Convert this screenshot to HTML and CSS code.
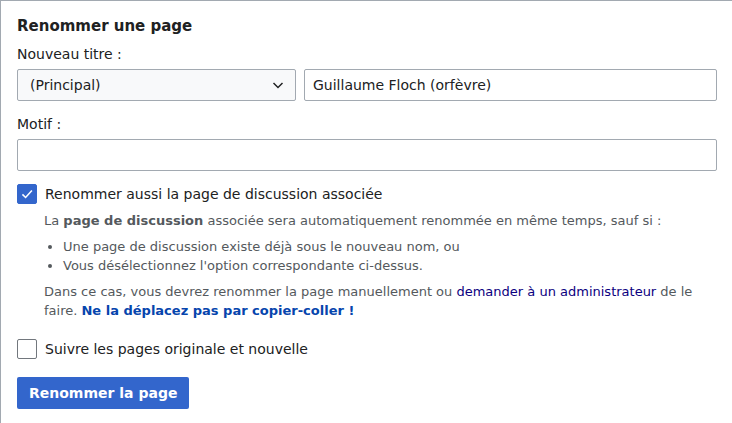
FILE: index.html
```html
<!DOCTYPE html>
<html lang="fr">
<head>
<meta charset="utf-8">
<link rel="stylesheet" href="styles.css">
</head>
<body>
<form class="fieldset">
  <div class="legend">Renommer une page</div>
  <div class="field">
    <div class="label">Nouveau titre :</div>
    <div class="title-row">
      <div class="select">
        <span>(Principal)</span>
        <svg class="chev" width="12" height="12" viewBox="0 0 20 20"><path d="M2.5 6.5 10 14l7.5-7.5" fill="none" stroke="#202122" stroke-width="2.4"/></svg>
      </div>
      <div class="input">Guillaume Floch (orfèvre)</div>
    </div>
  </div>
  <div class="field">
    <div class="label">Motif :</div>
    <div class="input wide"></div>
  </div>
  <div class="check-row">
    <span class="box checked"><svg width="14" height="14" viewBox="0 0 20 20"><path d="M3.5 10.5 8 15l9-10" fill="none" stroke="#fff" stroke-width="2.2"/></svg></span>
    <span class="check-label">Renommer aussi la page de discussion associée</span>
  </div>
  <div class="help">
    <p>La <b>page de discussion</b> associée sera automatiquement renommée en même temps, sauf si :</p>
    <ul>
      <li>Une page de discussion existe déjà sous le nouveau nom, ou</li>
      <li>Vous désélectionnez l'option correspondante ci-dessus.</li>
    </ul>
    <p>Dans ce cas, vous devrez renommer la page manuellement ou <a class="visited" href="#">demander à un administrateur</a> de le faire. <b class="strong-link">Ne la déplacez pas par copier-coller !</b></p>
  </div>
  <div class="check-row second">
    <span class="box"></span>
    <span class="check-label">Suivre les pages originale et nouvelle</span>
  </div>
  <div class="btn">Renommer la page</div>
</form>
</body>
</html>
```
FILE: styles.css
```css
html, body {
  margin: 0;
  padding: 0;
  overflow: hidden;
  background: #fff;
}
body {
  font-family: "DejaVu Sans", sans-serif;
  font-size: 14px;
  color: #202122;
}
.fieldset {
  width: 700px;
  border: 1px solid #a2a9b1;
  padding: 12px 16px 40px;
  margin: 0;
}
.legend {
  font-weight: bold;
  font-size: 15px;
  line-height: 26px;
  margin-bottom: 5px;
}
.label {
  line-height: 20px;
  margin-bottom: 5px;
}
.field {
  margin-bottom: 13px;
}
.title-row {
  display: flex;
  gap: 8px;
}
.select {
  width: 279px;
  box-sizing: border-box;
  height: 32px;
  border: 1px solid #a2a9b1;
  border-radius: 2px;
  background: #f8f9fa;
  display: flex;
  align-items: center;
  justify-content: space-between;
  padding: 0 11px 0 12px;
}
.input {
  flex: 1;
  box-sizing: border-box;
  height: 32px;
  border: 1px solid #a2a9b1;
  border-radius: 2px;
  background: #fff;
  display: flex;
  align-items: center;
  padding: 0 8px;
}
.input.wide {
  width: 100%;
}
.check-row {
  display: flex;
  align-items: center;
  gap: 8px;
  margin-top: 4px;
}
.box {
  width: 20px;
  height: 20px;
  box-sizing: border-box;
  border: 1px solid #72777d;
  border-radius: 2px;
  display: flex;
  align-items: center;
  justify-content: center;
  background: #fff;
}
.box.checked {
  background: #3366cc;
  border-color: #3366cc;
}
.help {
  margin-left: 27px;
  font-size: 13px;
  color: #54595d;
  line-height: 19px;
}
.help p {
  margin: 7px 0;
}
.help ul {
  margin: 0;
  padding-left: 19px;
  list-style: disc;
}
.help a.visited {
  color: #0b0080;
  text-decoration: none;
}
.strong-link {
  color: #0645ad;
}
.check-row.second {
  margin-top: 19px;
}
.btn {
  display: inline-flex;
  align-items: center;
  margin-top: 18px;
  height: 32px;
  box-sizing: border-box;
  padding: 0 12px;
  background: #3366cc;
  color: #fff;
  font-weight: bold;
  border-radius: 2px;
}
```
